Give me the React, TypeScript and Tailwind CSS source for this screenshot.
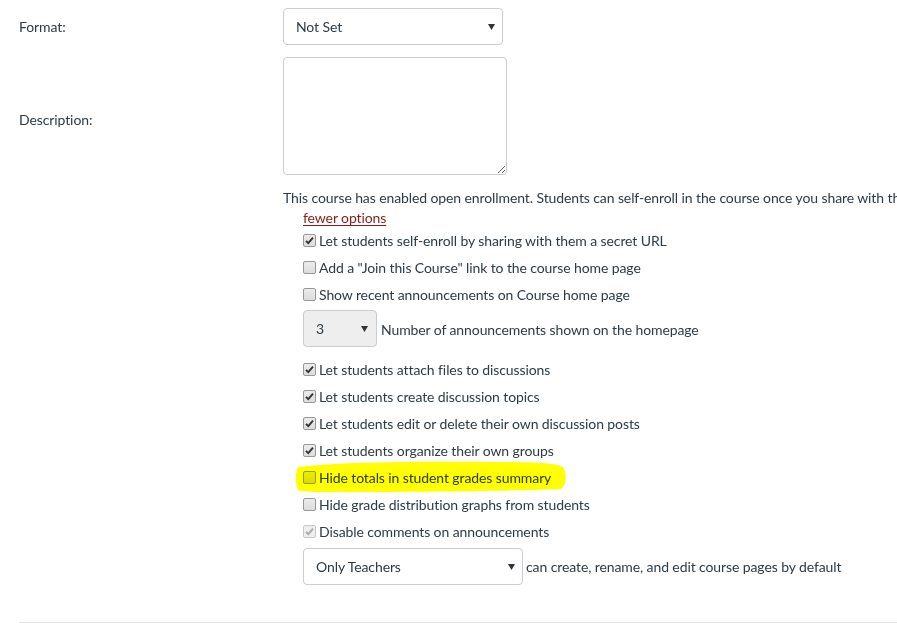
import React from "react";

const TEXT = "text-[#2d3b45]";

function Arrow() {
  return (
    <svg width="7" height="6" viewBox="0 0 7 6" className="shrink-0">
      <path d="M0 0 H7 L3.5 6 Z" fill="#333" />
    </svg>
  );
}

function Checkbox({ checked, disabled }: { checked?: boolean; disabled?: boolean }) {
  return (
    <span
      className={`relative inline-flex w-[13px] h-[13px] shrink-0 rounded-[2px] border items-center justify-center ${
        disabled ? "border-[#c8c8c8] bg-[#eeeeee]" : "border-[#989898] bg-gradient-to-b from-[#ececec] to-[#dcdcdc]"
      }`}
    >
      {checked && (
        <svg width="11" height="11" viewBox="0 0 11 11">
          <path
            d="M2 5.8 L4.3 8.2 L9 2.6"
            fill="none"
            stroke={disabled ? "#a8a8a8" : "#333"}
            strokeWidth="1.9"
          />
        </svg>
      )}
    </span>
  );
}

function Row({
  label,
  checked,
  disabled,
  children,
}: {
  label: string;
  checked?: boolean;
  disabled?: boolean;
  children?: React.ReactNode;
}) {
  return (
    <div className="relative flex items-center h-[27px]">
      <Checkbox checked={checked} disabled={disabled} />
      <span className={`ml-[3px] whitespace-nowrap ${TEXT}`}>{label}</span>
      {children}
    </div>
  );
}

function Select({
  value,
  className,
  arrowRight,
}: {
  value: string;
  className: string;
  arrowRight: string;
}) {
  return (
    <div
      className={`flex items-center justify-between border border-[#c7cdd1] rounded-[4px] h-[37px] pl-[12px] ${arrowRight} ${className}`}
    >
      <span className={TEXT}>{value}</span>
      <Arrow />
    </div>
  );
}

export default function App() {
  return (
    <div
      className={`w-[897px] h-[623px] overflow-hidden bg-white ${TEXT} text-[14px] leading-[20px] tracking-[-0.1px]`}
      style={{ fontFamily: "Lato, 'Open Sans', sans-serif" }}
    >
      <div className="pl-[19px] pt-[8px]">
        {/* Format */}
        <div className="flex items-center">
          <div className="w-[264px] shrink-0">Format:</div>
          <Select value="Not Set" className="w-[220px] bg-white" arrowRight="pr-[7px]" />
        </div>

        {/* Description */}
        <div className="flex items-center mt-[12px]">
          <div className="w-[264px] shrink-0 mt-[8px]">Description:</div>
          <textarea className="w-[224px] h-[118px] border border-[#c7cdd1] rounded-[4px] bg-white" />
        </div>

        <div className="ml-[264px] mt-[13px]">
          <p className="whitespace-nowrap">
            This course has enabled open enrollment. Students can self-enroll in the course once you share with them the URL for this site.
          </p>
          <div className="pl-[20px]">
            <div className="h-[18px] leading-[18px] mt-[1px]">
              <a className="text-[#8b1a1a] underline underline-offset-2" href="#">
                fewer options
              </a>
            </div>
            <Row label="Let students self-enroll by sharing with them a secret URL" checked />
            <Row label={'Add a "Join this Course" link to the course home page'} />
            <Row label="Show recent announcements on Course home page" />
            <div className="flex items-center mt-[2px]">
              <Select value="3" className="w-[74px] bg-[#eeeeee]" arrowRight="pr-[8px]" />
              <span className="ml-[4px] mt-[2px] whitespace-nowrap">Number of announcements shown on the homepage</span>
            </div>
            <div className="mt-[9px]">
              <Row label="Let students attach files to discussions" checked />
              <Row label="Let students create discussion topics" checked />
              <Row label="Let students edit or delete their own discussion posts" checked />
              <Row label="Let students organize their own groups" checked />
              <Row label="Hide totals in student grades summary">
                <svg
                  className="absolute left-[-8px] top-[-3px] mix-blend-multiply pointer-events-none"
                  width="272"
                  height="32"
                  viewBox="0 0 272 32"
                >
                  <path
                    d="M3 6 C40 1 120 0 200 1 C240 1 262 2 268 6 C272 12 272 24 266 28 C220 30 120 31 40 31 C20 31 8 31 3 29 C0 24 0 11 3 6 Z"
                    fill="#ffff00"
                  />
                </svg>
              </Row>
              <Row label="Hide grade distribution graphs from students" />
              <Row label="Disable comments on announcements" checked disabled />
            </div>
            <div className="flex items-center mt-[3px]">
              <Select value="Only Teachers" className="w-[220px] bg-white" arrowRight="pr-[7px]" />
              <span className="ml-[3px] whitespace-nowrap">can create, rename, and edit course pages by default</span>
            </div>
          </div>
        </div>

        <div className="mt-[37px] border-t border-[#e2e2e2]" />
      </div>
    </div>
  );
}
